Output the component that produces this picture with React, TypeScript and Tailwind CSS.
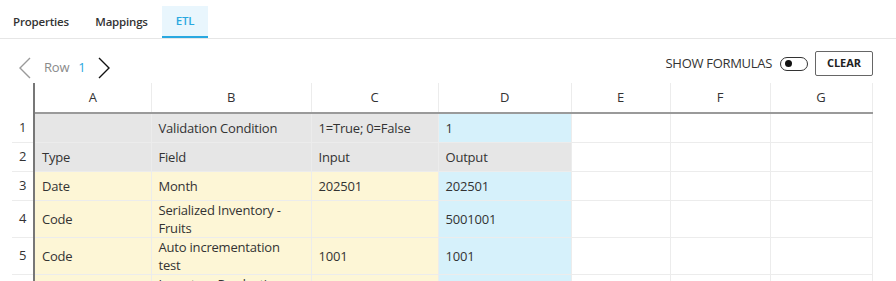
import React from "react";

type Tone = "gray" | "yellow" | "blue" | "white";

const COLS = [
  { key: "A", width: 117 },
  { key: "B", width: 160 },
  { key: "C", width: 127 },
  { key: "D", width: 133 },
  { key: "E", width: 99 },
  { key: "F", width: 100 },
  { key: "G", width: 102 },
];

const ROWS: { n: number; h: string; cells: [string, Tone][] }[] = [
  {
    n: 1,
    h: "h-[29px]",
    cells: [
      ["", "gray"],
      ["Validation Condition", "gray"],
      ["1=True; 0=False", "gray"],
      ["1", "blue"],
      ["", "white"],
      ["", "white"],
      ["", "white"],
    ],
  },
  {
    n: 2,
    h: "h-[29px]",
    cells: [
      ["Type", "gray"],
      ["Field", "gray"],
      ["Input", "gray"],
      ["Output", "gray"],
      ["", "white"],
      ["", "white"],
      ["", "white"],
    ],
  },
  {
    n: 3,
    h: "h-[29px]",
    cells: [
      ["Date", "yellow"],
      ["Month", "yellow"],
      ["202501", "yellow"],
      ["202501", "blue"],
      ["", "white"],
      ["", "white"],
      ["", "white"],
    ],
  },
  {
    n: 4,
    h: "h-[37px]",
    cells: [
      ["Code", "yellow"],
      ["Serialized Inventory - Fruits", "yellow"],
      ["", "yellow"],
      ["5001001", "blue"],
      ["", "white"],
      ["", "white"],
      ["", "white"],
    ],
  },
  {
    n: 5,
    h: "h-[36px]",
    cells: [
      ["Code", "yellow"],
      ["Auto incrementation test", "yellow"],
      ["1001", "yellow"],
      ["1001", "blue"],
      ["", "white"],
      ["", "white"],
      ["", "white"],
    ],
  },
  {
    n: 6,
    h: "h-[37px]",
    cells: [
      ["", "yellow"],
      ["Inventory Production - Fruits", "yellow"],
      ["", "yellow"],
      ["", "blue"],
      ["", "white"],
      ["", "white"],
      ["", "white"],
    ],
  },
];

const toneClass: Record<Tone, string> = {
  gray: "bg-[#e6e6e6]",
  yellow: "bg-[#fdf6d6]",
  blue: "bg-[#d6f1fb]",
  white: "bg-white",
};

export default function App() {
  return (
    <div className="w-[896px] h-[281px] overflow-hidden bg-white text-[#333] font-['Open_Sans',sans-serif]">
      {/* Tabs */}
      <div className="flex h-[39px] pt-[6px] border-b border-[#e6e6e6] text-[11.5px] font-semibold tracking-[-0.2px]">
        <div className="w-[82px] flex items-center justify-center text-[#333]">Properties</div>
        <div className="w-[79px] flex items-center justify-center text-[#333]">Mappings</div>
        <div className="ml-[1px] w-[46px] flex items-center justify-center text-[#29a8e0] bg-[#e9f6fd] border-b-2 border-[#29a8e0]">
          ETL
        </div>
      </div>

      {/* Row nav + toolbar */}
      <div className="flex items-center h-[44px] pt-[5px] pl-[18px] pr-[23px]">
        <div className="flex items-center mt-[8px]">
          <svg width="13" height="22" viewBox="0 0 13 22">
            <path d="M12 1 L2 11 L12 21" fill="none" stroke="#9a9a9a" strokeWidth="1.4" />
          </svg>
          <span className="ml-[13px] text-[13px] tracking-[-0.2px] text-[#8a8a8a]">Row</span>
          <span className="ml-[9px] text-[13px] text-[#29a8e0]">1</span>
          <svg width="13" height="22" viewBox="0 0 13 22" className="ml-[12px]">
            <path d="M1 1 L11 11 L1 21" fill="none" stroke="#111" strokeWidth="1.4" />
          </svg>
        </div>
        <div className="flex-1" />
        <span className="text-[13px] text-[#333] tracking-[-0.3px]">SHOW FORMULAS</span>
        <div className="ml-[8px] w-[28px] h-[14px] rounded-full border border-[#333] flex items-center pl-[4px]">
          <div className="w-[7px] h-[7px] rounded-full bg-[#111]" />
        </div>
        <button className="ml-[7px] w-[58px] h-[25px] border border-[#666] rounded-[2px] text-[11px] font-bold text-[#222] bg-white">
          CLEAR
        </button>
      </div>

      {/* Grid */}
      <div className="pl-[12px]">
        <table className="border-collapse table-fixed text-[13px] tracking-[-0.2px] text-[#333]">
          <colgroup>
            <col style={{ width: 22 }} />
            {COLS.map((c) => (
              <col key={c.key} style={{ width: c.width }} />
            ))}
          </colgroup>
          <thead>
            <tr className="h-[30px]">
              <th className="border-r-2 border-r-[#777] border-b-2 border-b-transparent p-0" />
              {COLS.map((c) => (
                <th
                  key={c.key}
                  className="font-normal text-center border-r border-[#ececec] border-b-2 border-b-[#9a9a9a] p-0"
                >
                  {c.key}
                </th>
              ))}
            </tr>
          </thead>
          <tbody>
            {ROWS.map((r) => (
              <tr key={r.n} className={r.h}>
                <td className="text-center border-r-2 border-r-[#777] border-b border-b-[#ececec] p-0">{r.n}</td>
                {r.cells.map(([text, tone], i) => (
                  <td
                    key={i}
                    className={`${toneClass[tone]} border-r border-b border-[#ececec] px-[7px] py-0 leading-[18px] align-middle`}
                  >
                    {text}
                  </td>
                ))}
              </tr>
            ))}
          </tbody>
        </table>
      </div>
    </div>
  );
}
